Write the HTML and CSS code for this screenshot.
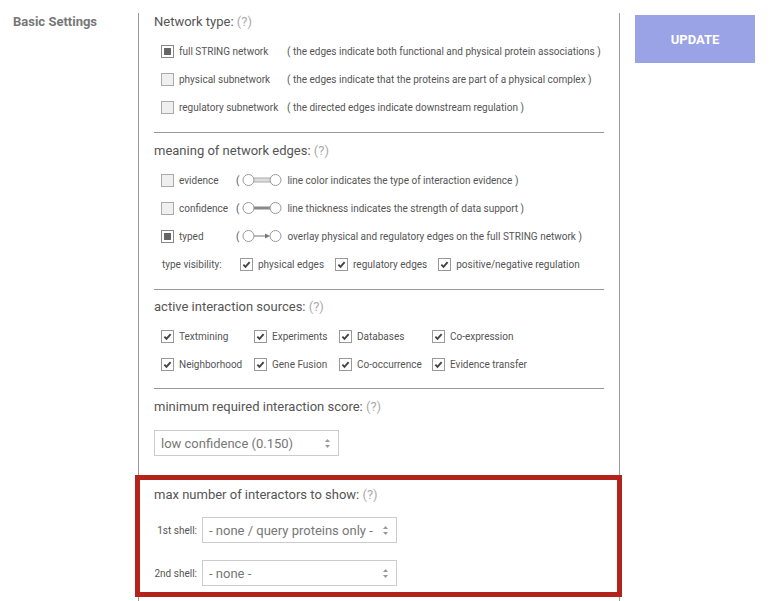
FILE: index.html
```html
<!DOCTYPE html>
<html lang="en">
<head>
    <meta charset="UTF-8">
    <title>Basic Settings</title>
    <link rel="stylesheet" href="styles.css">
</head>
<body>

    <div class="page">
        <div class="side-title">Basic Settings</div>

        <div class="panel">

            <!-- Network type -->
            <div class="section first">
                <div class="sec-title">Network type: <span class="help">(?)</span></div>
                <div class="row">
                    <span class="box filled"></span>
                    <span class="label wide">full STRING network</span>
                    <span class="desc">( the edges indicate both functional and physical protein associations )</span>
                </div>
                <div class="row">
                    <span class="box"></span>
                    <span class="label wide">physical subnetwork</span>
                    <span class="desc">( the edges indicate that the proteins are part of a physical complex )</span>
                </div>
                <div class="row">
                    <span class="box"></span>
                    <span class="label wide">regulatory subnetwork</span>
                    <span class="desc">( the directed edges indicate downstream regulation )</span>
                </div>
            </div>

            <!-- Edges -->
            <div class="section">
                <div class="sec-title">meaning of network edges: <span class="help">(?)</span></div>
                <div class="row">
                    <span class="box"></span>
                    <span class="label">evidence</span>
                    <span class="desc">(
                        <svg class="edge" width="40" height="14" viewBox="0 0 40 14">
                            <rect x="11" y="5" width="18" height="4" fill="#ddd" stroke="#aaa" stroke-width="1"/>
                            <circle cx="6.5" cy="7" r="5.5" fill="#fff" stroke="#999"/>
                            <circle cx="33.5" cy="7" r="5.5" fill="#fff" stroke="#999"/>
                        </svg>
                        line color indicates the type of interaction evidence )</span>
                </div>
                <div class="row">
                    <span class="box"></span>
                    <span class="label">confidence</span>
                    <span class="desc">(
                        <svg class="edge" width="40" height="14" viewBox="0 0 40 14">
                            <line x1="11" y1="7" x2="29" y2="7" stroke="#888" stroke-width="3"/>
                            <circle cx="6.5" cy="7" r="5.5" fill="#fff" stroke="#999"/>
                            <circle cx="33.5" cy="7" r="5.5" fill="#fff" stroke="#999"/>
                        </svg>
                        line thickness indicates the strength of data support )</span>
                </div>
                <div class="row">
                    <span class="box filled"></span>
                    <span class="label">typed</span>
                    <span class="desc">(
                        <svg class="edge" width="40" height="14" viewBox="0 0 40 14">
                            <line x1="11" y1="7" x2="24" y2="7" stroke="#777" stroke-width="1"/>
                            <polygon points="23,4.5 28,7 23,9.5" fill="#777"/>
                            <circle cx="6.5" cy="7" r="5.5" fill="#fff" stroke="#999"/>
                            <circle cx="33.5" cy="7" r="5.5" fill="#fff" stroke="#999"/>
                        </svg>
                        overlay physical and regulatory edges on the full STRING network )</span>
                </div>
                <div class="row visibility">
                    <span class="vis-label">type visibility:</span>
                    <span class="box checked"><svg viewBox="0 0 13 13"><path d="M2.8 6.6 L5.3 9.3 L10.2 3.6" /></svg></span>
                    <span class="vis-item">physical edges</span>
                    <span class="box checked"><svg viewBox="0 0 13 13"><path d="M2.8 6.6 L5.3 9.3 L10.2 3.6" /></svg></span>
                    <span class="vis-item">regulatory edges</span>
                    <span class="box checked"><svg viewBox="0 0 13 13"><path d="M2.8 6.6 L5.3 9.3 L10.2 3.6" /></svg></span>
                    <span>positive/negative regulation</span>
                </div>
            </div>

            <!-- Sources -->
            <div class="section sources">
                <div class="sec-title">active interaction sources: <span class="help">(?)</span></div>
                <div class="source-grid">
                    <div class="row"><span class="box checked"><svg viewBox="0 0 13 13"><path d="M2.8 6.6 L5.3 9.3 L10.2 3.6" /></svg></span>Textmining</div>
                    <div class="row"><span class="box checked"><svg viewBox="0 0 13 13"><path d="M2.8 6.6 L5.3 9.3 L10.2 3.6" /></svg></span>Experiments</div>
                    <div class="row"><span class="box checked"><svg viewBox="0 0 13 13"><path d="M2.8 6.6 L5.3 9.3 L10.2 3.6" /></svg></span>Databases</div>
                    <div class="row"><span class="box checked"><svg viewBox="0 0 13 13"><path d="M2.8 6.6 L5.3 9.3 L10.2 3.6" /></svg></span>Co-expression</div>
                    <div class="row"><span class="box checked"><svg viewBox="0 0 13 13"><path d="M2.8 6.6 L5.3 9.3 L10.2 3.6" /></svg></span>Neighborhood</div>
                    <div class="row"><span class="box checked"><svg viewBox="0 0 13 13"><path d="M2.8 6.6 L5.3 9.3 L10.2 3.6" /></svg></span>Gene Fusion</div>
                    <div class="row"><span class="box checked"><svg viewBox="0 0 13 13"><path d="M2.8 6.6 L5.3 9.3 L10.2 3.6" /></svg></span>Co-occurrence</div>
                    <div class="row"><span class="box checked"><svg viewBox="0 0 13 13"><path d="M2.8 6.6 L5.3 9.3 L10.2 3.6" /></svg></span>Evidence transfer</div>
                </div>
            </div>

            <!-- Score -->
            <div class="section score">
                <div class="sec-title">minimum required interaction score: <span class="help">(?)</span></div>
                <div class="select score-select">
                    <span>low confidence (0.150)</span>
                    <svg class="arrows" width="7" height="11" viewBox="0 0 7 11"><polygon points="3.5,1 6,4 1,4" /><polygon points="1,7 6,7 3.5,10" /></svg>
                </div>
            </div>

            <!-- Interactors -->
            <div class="section highlight">
                <div class="sec-title">max number of interactors to show: <span class="help">(?)</span></div>
                <div class="shell-row">
                    <span class="shell-label">1st shell:</span>
                    <div class="select shell-select">
                        <span>- none / query proteins only -</span>
                        <svg class="arrows" width="7" height="11" viewBox="0 0 7 11"><polygon points="3.5,1 6,4 1,4" /><polygon points="1,7 6,7 3.5,10" /></svg>
                    </div>
                </div>
                <div class="shell-row second">
                    <span class="shell-label">2nd shell:</span>
                    <div class="select shell-select">
                        <span>- none -</span>
                        <svg class="arrows" width="7" height="11" viewBox="0 0 7 11"><polygon points="3.5,1 6,4 1,4" /><polygon points="1,7 6,7 3.5,10" /></svg>
                    </div>
                </div>
            </div>

        </div>

        <div class="actions">
            <button type="button" class="update-btn">UPDATE</button>
        </div>
    </div>

</body>
</html>
```

FILE: styles.css
```css
* {
    box-sizing: border-box;
}

body {
    margin: 0;
    background: #fff;
    font-family: Roboto, "Liberation Sans", Arial, sans-serif;
    color: #555;
}

.page {
    display: flex;
    align-items: flex-start;
    padding-top: 13px;
}

.side-title {
    width: 138px;
    padding-left: 13px;
    font-size: 13px;
    font-weight: bold;
    line-height: 18px;
    color: #777;
}

.panel {
    width: 482px;
    border-left: 1px solid #999;
    border-right: 1px solid #999;
    padding-bottom: 4px;
}

.section {
    margin: 0 15px;
    padding: 9px 0 11px;
    border-bottom: 1px solid #999;
}

.section.first {
    padding-top: 0;
}

.section.sources {
    padding: 8px 0 10px;
}

.section.score {
    padding-bottom: 20px;
}

.section.highlight {
    position: relative;
    padding-bottom: 11px;
    border-bottom: none;
}

/* red annotation frame over the last block */
.section.highlight::after {
    content: "";
    position: absolute;
    left: -19px;
    right: -18px;
    top: -2px;
    bottom: 0;
    border: 5px solid #b3231a;
}

.sec-title {
    font-size: 13px;
    line-height: 18px;
    color: #555;
    margin-bottom: 6px;
}

.help {
    color: #aaa;
}

.row {
    display: flex;
    align-items: center;
    height: 28px;
    padding-left: 7px;
    font-size: 10px;
    color: #555;
    white-space: nowrap;
}

.box {
    flex: none;
    width: 13px;
    height: 13px;
    margin-right: 5px;
    border: 1px solid #aaa;
    background: #efefef;
    position: relative;
}

.box.filled {
    border-color: #888;
    background: #fff;
}

.box.filled::before {
    content: "";
    position: absolute;
    left: 2px;
    top: 2px;
    right: 2px;
    bottom: 2px;
    background: #666;
}

.box.checked {
    background: #fff;
    border-color: #999;
}

.box.checked svg {
    display: block;
    width: 11px;
    height: 11px;
}

.box.checked path {
    fill: none;
    stroke: #444;
    stroke-width: 2.2;
}

.label {
    flex: none;
    width: 57px;
}

.label.wide {
    width: 108px;
}

.desc {
    display: flex;
    align-items: center;
    color: #555;
}

.edge {
    flex: none;
    margin: 0 5px 0 3px;
}

.visibility {
    padding-left: 8px;
}

.vis-label {
    flex: none;
    width: 78px;
}

.vis-item {
    margin-right: 11px;
}

.source-grid {
    display: grid;
    grid-template-columns: 93px 85px 93px auto;
}

.select {
    display: flex;
    align-items: center;
    justify-content: space-between;
    height: 26px;
    padding: 0 7px 0 6px;
    border: 1px solid #ccc;
    background: #fff;
    font-size: 13px;
    color: #777;
    white-space: nowrap;
    overflow: hidden;
}

.arrows {
    flex: none;
}

.arrows polygon {
    fill: #999;
}

/* margins collapse with the title's 6px */
.score-select {
    width: 185px;
    margin-top: 14px;
}

.shell-row {
    display: flex;
    align-items: center;
    margin-top: 13px;
}

.shell-row.second {
    margin-top: 17px;
}

.shell-label {
    width: 43px;
    margin-right: 5px;
    text-align: right;
    font-size: 10px;
    color: #555;
    white-space: nowrap;
}

.shell-select {
    width: 195px;
}

.actions {
    margin-left: 15px;
    padding-top: 2px;
}

.update-btn {
    width: 120px;
    height: 48px;
    border: none;
    background: #99a3e6;
    color: #fff;
    font-family: Roboto, "Liberation Sans", Arial, sans-serif;
    font-size: 13px;
    font-weight: bold;
}
```
